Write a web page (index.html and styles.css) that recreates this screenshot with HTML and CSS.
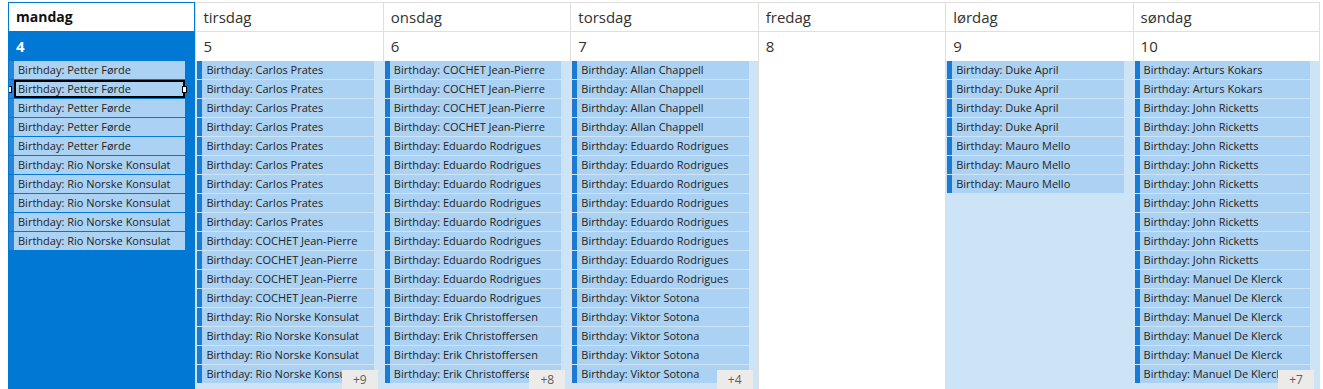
FILE: index.html
```html
<!DOCTYPE html>
<html lang="no">
<head>
<meta charset="utf-8">
<title>Uke</title>
<link rel="stylesheet" href="styles.css">
</head>
<body>
<div class="cal">
  <div class="col today">
    <div class="head">mandag</div>
    <div class="date">4</div>
    <div class="events">
      <div class="ev">Birthday: Petter Førde</div>
      <div class="ev selected">Birthday: Petter Førde<span class="handle l"></span><span class="handle r"></span></div>
      <div class="ev">Birthday: Petter Førde</div>
      <div class="ev">Birthday: Petter Førde</div>
      <div class="ev">Birthday: Petter Førde</div>
      <div class="ev">Birthday: Rio Norske Konsulat</div>
      <div class="ev">Birthday: Rio Norske Konsulat</div>
      <div class="ev">Birthday: Rio Norske Konsulat</div>
      <div class="ev">Birthday: Rio Norske Konsulat</div>
      <div class="ev">Birthday: Rio Norske Konsulat</div>
    </div>
  </div>
  <div class="col">
    <div class="head">tirsdag</div>
    <div class="date">5</div>
    <div class="events filled">
      <div class="ev">Birthday: Carlos Prates</div>
      <div class="ev">Birthday: Carlos Prates</div>
      <div class="ev">Birthday: Carlos Prates</div>
      <div class="ev">Birthday: Carlos Prates</div>
      <div class="ev">Birthday: Carlos Prates</div>
      <div class="ev">Birthday: Carlos Prates</div>
      <div class="ev">Birthday: Carlos Prates</div>
      <div class="ev">Birthday: Carlos Prates</div>
      <div class="ev">Birthday: Carlos Prates</div>
      <div class="ev">Birthday: COCHET Jean-Pierre</div>
      <div class="ev">Birthday: COCHET Jean-Pierre</div>
      <div class="ev">Birthday: COCHET Jean-Pierre</div>
      <div class="ev">Birthday: COCHET Jean-Pierre</div>
      <div class="ev">Birthday: Rio Norske Konsulat</div>
      <div class="ev">Birthday: Rio Norske Konsulat</div>
      <div class="ev">Birthday: Rio Norske Konsulat</div>
      <div class="ev">Birthday: Rio Norske Konsulat</div>
      <div class="more">+9</div>
    </div>
  </div>
  <div class="col">
    <div class="head">onsdag</div>
    <div class="date">6</div>
    <div class="events filled">
      <div class="ev">Birthday: COCHET Jean-Pierre</div>
      <div class="ev">Birthday: COCHET Jean-Pierre</div>
      <div class="ev">Birthday: COCHET Jean-Pierre</div>
      <div class="ev">Birthday: COCHET Jean-Pierre</div>
      <div class="ev">Birthday: Eduardo Rodrigues</div>
      <div class="ev">Birthday: Eduardo Rodrigues</div>
      <div class="ev">Birthday: Eduardo Rodrigues</div>
      <div class="ev">Birthday: Eduardo Rodrigues</div>
      <div class="ev">Birthday: Eduardo Rodrigues</div>
      <div class="ev">Birthday: Eduardo Rodrigues</div>
      <div class="ev">Birthday: Eduardo Rodrigues</div>
      <div class="ev">Birthday: Eduardo Rodrigues</div>
      <div class="ev">Birthday: Eduardo Rodrigues</div>
      <div class="ev">Birthday: Erik Christoffersen</div>
      <div class="ev">Birthday: Erik Christoffersen</div>
      <div class="ev">Birthday: Erik Christoffersen</div>
      <div class="ev">Birthday: Erik Christoffersen</div>
      <div class="more">+8</div>
    </div>
  </div>
  <div class="col">
    <div class="head">torsdag</div>
    <div class="date">7</div>
    <div class="events filled">
      <div class="ev">Birthday: Allan Chappell</div>
      <div class="ev">Birthday: Allan Chappell</div>
      <div class="ev">Birthday: Allan Chappell</div>
      <div class="ev">Birthday: Allan Chappell</div>
      <div class="ev">Birthday: Eduardo Rodrigues</div>
      <div class="ev">Birthday: Eduardo Rodrigues</div>
      <div class="ev">Birthday: Eduardo Rodrigues</div>
      <div class="ev">Birthday: Eduardo Rodrigues</div>
      <div class="ev">Birthday: Eduardo Rodrigues</div>
      <div class="ev">Birthday: Eduardo Rodrigues</div>
      <div class="ev">Birthday: Eduardo Rodrigues</div>
      <div class="ev">Birthday: Eduardo Rodrigues</div>
      <div class="ev">Birthday: Viktor Sotona</div>
      <div class="ev">Birthday: Viktor Sotona</div>
      <div class="ev">Birthday: Viktor Sotona</div>
      <div class="ev">Birthday: Viktor Sotona</div>
      <div class="ev">Birthday: Viktor Sotona</div>
      <div class="more">+4</div>
    </div>
  </div>
  <div class="col">
    <div class="head">fredag</div>
    <div class="date">8</div>
    <div class="events"></div>
  </div>
  <div class="col">
    <div class="head">lørdag</div>
    <div class="date">9</div>
    <div class="events filled">
      <div class="ev">Birthday: Duke April</div>
      <div class="ev">Birthday: Duke April</div>
      <div class="ev">Birthday: Duke April</div>
      <div class="ev">Birthday: Duke April</div>
      <div class="ev">Birthday: Mauro Mello</div>
      <div class="ev">Birthday: Mauro Mello</div>
      <div class="ev">Birthday: Mauro Mello</div>
    </div>
  </div>
  <div class="col last">
    <div class="head">søndag</div>
    <div class="date">10</div>
    <div class="events filled">
      <div class="ev">Birthday: Arturs Kokars</div>
      <div class="ev">Birthday: Arturs Kokars</div>
      <div class="ev">Birthday: John Ricketts</div>
      <div class="ev">Birthday: John Ricketts</div>
      <div class="ev">Birthday: John Ricketts</div>
      <div class="ev">Birthday: John Ricketts</div>
      <div class="ev">Birthday: John Ricketts</div>
      <div class="ev">Birthday: John Ricketts</div>
      <div class="ev">Birthday: John Ricketts</div>
      <div class="ev">Birthday: John Ricketts</div>
      <div class="ev">Birthday: John Ricketts</div>
      <div class="ev">Birthday: Manuel De Klerck</div>
      <div class="ev">Birthday: Manuel De Klerck</div>
      <div class="ev">Birthday: Manuel De Klerck</div>
      <div class="ev">Birthday: Manuel De Klerck</div>
      <div class="ev">Birthday: Manuel De Klerck</div>
      <div class="ev">Birthday: Manuel De Klerck</div>
      <div class="more">+7</div>
    </div>
  </div>
</div>
</body>
</html>
```

FILE: styles.css
```css
html, body {
  margin: 0;
  padding: 0;
  background: #ffffff;
  overflow: hidden;
}

body {
  font-family: "Open Sans", "Noto Sans", sans-serif;
  color: #323130;
}

.cal {
  display: grid;
  grid-template-columns: repeat(7, 1fr);
  width: 1312px;
  height: 387px;
  margin: 2px 0 0 8px;
}

.col {
  display: flex;
  flex-direction: column;
  min-width: 0;
  border-left: 1px solid #e1dfdd;
  border-top: 1px solid #e1dfdd;
}

.col.last {
  border-right: 1px solid #e1dfdd;
}

.head {
  height: 28px;
  line-height: 28px;
  padding-left: 7px;
  font-size: 15px;
  border-bottom: 1px solid #e1dfdd;
  background: #ffffff;
}

.date {
  height: 29px;
  line-height: 29px;
  padding-left: 7px;
  font-size: 15px;
  background: #ffffff;
}

.events {
  position: relative;
  flex: 1;
  padding: 0 9px 0 1px;
  overflow: hidden;
}

.events.filled {
  background: #cde4f7;
}

.ev {
  position: relative;
  height: 18px;
  line-height: 17px;
  margin-bottom: 1px;
  padding-left: 4px;
  border-left: 5px solid #1a7ad4;
  background: #abd2f2;
  color: #252423;
  font-size: 11px;
  white-space: nowrap;
  overflow: hidden;
}

/* today column */
.today {
  border-color: #0078d4;
  border-right: 1px solid #0078d4;
  background: #0078d4;
}

.today .head {
  font-weight: 700;
  font-size: 14px;
  color: #111111;
  border-bottom-color: #0078d4;
}

.today .date {
  background: #0078d4;
  color: #ffffff;
  font-weight: 700;
}

.today .events {
  background: #0078d4;
  padding-left: 0;
}

.today .ev {
  border-left-color: #2a85d8;
}

.ev.selected {
  overflow: visible;
  box-shadow: inset 0 0 0 2px #000000;
}

.handle {
  position: absolute;
  top: 6px;
  width: 3px;
  height: 5px;
  background: #ffffff;
  border: 1px solid #000000;
}

.handle.l {
  left: -7px;
}

.handle.r {
  right: -2px;
}

.more {
  position: absolute;
  right: 5px;
  bottom: 0;
  width: 36px;
  height: 19px;
  line-height: 20px;
  text-align: center;
  background: #edebe9;
  color: #605e5c;
  font-size: 12px;
}
```
